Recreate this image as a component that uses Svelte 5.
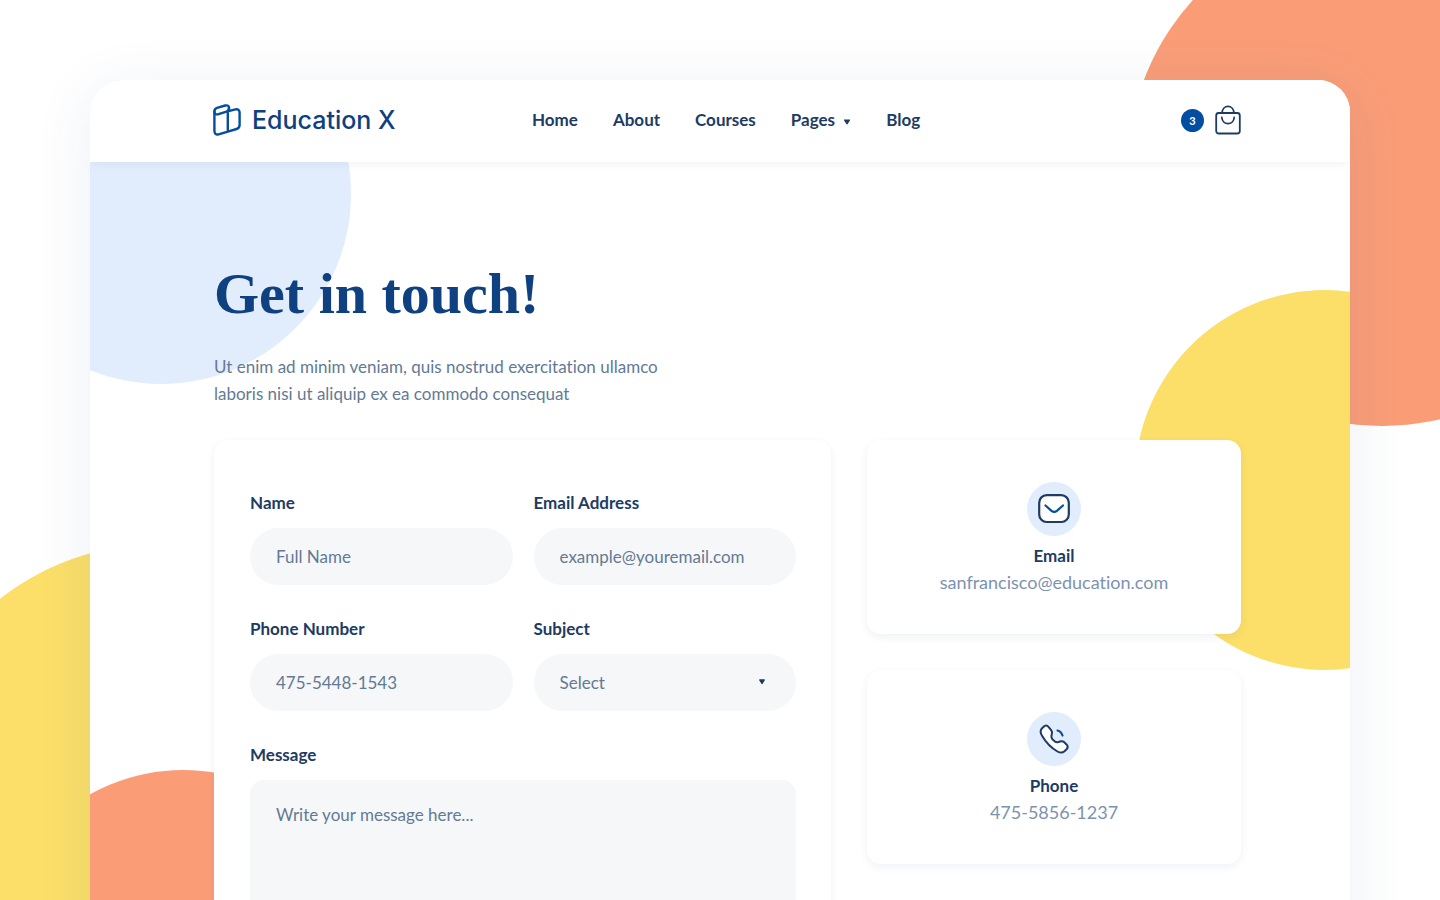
<script>
  const before = ['Home', 'About', 'Courses'];
  const contacts = [
    { kind: 'email', title: 'Email', value: 'sanfrancisco@education.com', href: 'mailto:sanfrancisco@education.com' },
    { kind: 'phone', title: 'Phone', value: '475-5856-1237', href: 'tel:475-5856-1237' }
  ];
</script>

<div class="scene">
  <div class="backdrop" aria-hidden="true">
    <span class="circle coral large top-right"></span>
    <span class="circle yellow large bottom-left"></span>
  </div>

  <div class="page">
    <span class="circle blue left" aria-hidden="true"></span>
    <span class="circle yellow right" aria-hidden="true"></span>
    <span class="circle coral low" aria-hidden="true"></span>

    <header>
      <div class="bar wrap">
        <a class="brand" href="#home">
          <svg class="logo" width="28" height="32" viewBox="1 0 28 32" fill="none" stroke="#034ea2" stroke-width="2.4" stroke-linejoin="round" stroke-linecap="round" aria-hidden="true">
            <path d="M5.500 10.200Q1.400 11 1.400 7.500Q1.400 4.700 4 3.900L12.200 1.500Q16 .7 16 4Q16 6.800 13.500 7.600L5.500 10.200"/>
            <path d="M1.400 7.500V26.500Q1.400 31.300 5.600 30.300L14.800 27.600V7.300L22.300 5.400Q26.600 4.700 26.600 8.800V21Q26.600 24.200 23.600 25L14.800 27.600M16 4V7"/>
          </svg>
          <span>Education X</span>
        </a>
        <nav>
          {#each before as item}
            <a href="#{item.toLowerCase()}">{item}</a>
          {/each}
          <a href="#pages">Pages
            <svg class="caret" width="8" height="6" viewBox="0 0 8 6" aria-hidden="true"><path d="M1.500 1H6.500L4 4.800Z" fill="#1d3b63" stroke="#1d3b63" stroke-width="1.200" stroke-linejoin="round"/></svg>
          </a>
          <a href="#blog">Blog</a>
        </nav>
        <a class="cart" href="#cart" aria-label="Cart, 3 items">
          <span class="count">3</span>
          <svg width="26" height="30" viewBox="0 0 26 30" fill="none" stroke="#1d3b63" stroke-width="1.8" stroke-linecap="round" aria-hidden="true">
            <rect x="1.200" y="8" width="23.600" height="20.500" rx="2.500"/>
            <path d="M7 8C7.500 -.8 18.500 -.8 19 8M6.800 12.500C7.500 20.600 18.500 20.600 19.200 12.500"/>
          </svg>
        </a>
      </div>
    </header>

    <main class="wrap">
      <h1>Get in touch!</h1>
      <p class="lead">Ut enim ad minim veniam, quis nostrud exercitation ullamco laboris nisi ut aliquip ex ea commodo consequat</p>

      <div class="columns">
        <form class="card">
          <div class="field">
            <label for="name">Name</label>
            <input id="name" type="text" placeholder="Full Name" />
          </div>
          <div class="field">
            <label for="email">Email Address</label>
            <input id="email" type="email" placeholder="example@youremail.com" />
          </div>
          <div class="field">
            <label for="phone">Phone Number</label>
            <input id="phone" type="tel" placeholder="475-5448-1543" />
          </div>
          <div class="field">
            <label for="subject">Subject</label>
            <div class="select">
              <select id="subject"><option>Select</option></select>
              <svg width="8" height="6" viewBox="0 0 8 6" aria-hidden="true"><path d="M1.800 1H6.200L4 4.500Z" fill="#1d3b63" stroke="#1d3b63" stroke-width="1.400" stroke-linejoin="round"/></svg>
            </div>
          </div>
          <div class="field full">
            <label for="message">Message</label>
            <textarea id="message" rows="6" placeholder="Write your message here..."></textarea>
          </div>
        </form>

        <aside>
          {#each contacts as c}
            <section class="card contact">
              <span class="badge">
                {#if c.kind === 'email'}
                  <svg width="54" height="54" viewBox="0 0 54 54" fill="none" stroke-linecap="round" aria-hidden="true">
                    <rect x="12.200" y="13.200" width="29.600" height="26.800" rx="7.500" fill="#fff" stroke="#1d3b63" stroke-width="2.200"/>
                    <path d="M18.500 23.500L24.500 28.800Q27.200 31 29.900 28.800L36 23.500" stroke="#034ea2" stroke-width="2.200"/>
                  </svg>
                {:else}
                  <svg width="54" height="54" viewBox="0 0 54 54" fill="none" stroke-linecap="round" stroke-linejoin="round" aria-hidden="true">
                    <path d="M14.800 16.500L17.500 14Q19.700 12.700 21.500 14.800L24.300 18.300Q25.500 20 24.800 22L24.400 24.200Q24.300 26 25.600 27.500L28 29.600Q29.500 30.600 31.500 30L34 29.200Q35.700 28.900 37 30L40 33Q41.500 35 39.800 37L37.500 39.300Q34.500 41.800 30.500 39.500Q21 34 15.200 24Q12.300 19.500 14.800 16.500Z" fill="#fff" stroke="#1d3b63" stroke-width="2"/>
                    <path d="M30.500 18.500Q34.300 19.400 35.500 23.500" stroke="#034ea2" stroke-width="2.200"/>
                  </svg>
                {/if}
              </span>
              <h2>{c.title}</h2>
              <a href={c.href}>{c.value}</a>
            </section>
          {/each}
        </aside>
      </div>
    </main>
  </div>
</div>

<style>
  :global(body) { margin: 0; background: #fff; }
  .scene, .scene * { box-sizing: border-box; }
  .scene {
    position: relative;
    height: 100vh;
    overflow: hidden auto;
    scrollbar-width: none;
    padding: 80px 90px 0;
    font-family: Lato, sans-serif;
    font-size: 17px;
    font-variant-ligatures: none;
    color: #1d3b63;
  }
  a { color: inherit; text-decoration: none; }
  .backdrop { position: absolute; inset: 0; overflow: hidden; }
  .circle { position: absolute; width: 380px; height: 380px; border-radius: 50%; }
  .large { width: 510px; height: 510px; }
  .coral { background: #fa9d77; }
  .yellow { background: #fbdf69; }
  .blue { background: #e1edfc; }
  .top-right { top: -84px; right: -197px; }
  .bottom-left { top: 544px; left: -97px; }
  .left { top: -76px; left: -119px; }
  .right { top: 210px; right: -165px; }
  .low { top: 690px; left: -97px; }

  .page {
    position: relative;
    overflow: hidden;
    min-height: 100%;
    background: #fff;
    border-radius: 32px 32px 0 0;
    box-shadow: 0 10px 60px rgba(29, 78, 140, 0.09);
  }
  .wrap { width: 100%; padding: 0 109px 0 124px; }
  header { position: relative; background: #fff; box-shadow: 0 2px 10px rgba(0, 0, 0, 0.05); }
  .bar { display: grid; grid-template-columns: 318px 1fr auto; align-items: center; height: 82px; padding-bottom: 2px; }
  .brand { display: flex; align-items: center; gap: 10px; font-family: Inter, sans-serif; font-size: 25px; font-weight: 500; color: #0f407f; }
  .logo { overflow: visible; }
  nav { display: flex; gap: 35px; padding-bottom: 2px; font-weight: 700; }
  .caret { margin-left: 4px; vertical-align: 1px; }
  .cart { display: flex; align-items: center; gap: 11px; }
  .count { width: 23px; height: 23px; border-radius: 50%; background: #034ea2; color: #fff; font-size: 11px; line-height: 23px; font-weight: 700; text-align: center; }

  main { position: relative; padding-bottom: 60px !important; }
  h1 { margin: 0; padding-top: 96px; font-family: "Liberation Serif", serif; font-weight: 700; font-size: 58px; line-height: 72px; color: #0f407f; }
  .lead { width: 460px; margin: 23px 0 33px; font-size: 17px; line-height: 27px; color: #647a94; }
  .columns { display: grid; grid-template-columns: 1.65fr 1fr; gap: 36px; align-items: start; }
  .card { background: #fff; border-radius: 14px; box-shadow: 0 3px 8px rgba(29, 59, 99, 0.07); }
  form { display: grid; grid-template-columns: 1fr 1fr; gap: 32px 21px; padding: 51px 35px 36px 36px; }
  .field { display: flex; flex-direction: column; gap: 13px; min-width: 0; }
  .full { grid-column: 1 / -1; }
  label { font-weight: 700; line-height: 24px; }
  input, select, textarea {
    display: block;
    width: 100%;
    height: 57px;
    padding: 0 26px;
    border: 0;
    border-radius: 29px;
    background: #f5f7f9;
    color: #647a94;
    font: inherit;
    appearance: none;
  }
  textarea { height: 180px; padding: 24px 26px; border-radius: 14px; resize: none; }
  ::placeholder { color: #647a94; opacity: 1; }
  .select { position: relative; }
  .select svg { position: absolute; right: 30px; top: 25px; pointer-events: none; }
  aside { display: grid; gap: 36px; }
  .contact { display: flex; flex-direction: column; align-items: center; padding: 42px 20px 38px; }
  .badge { width: 54px; height: 54px; border-radius: 50%; background: #e1edfc; }
  h2 { margin: 6px 0 0; font-size: 17px; line-height: 27px; }
  .contact a { font-size: 18px; line-height: 27px; color: #7d92b1; }
</style>
